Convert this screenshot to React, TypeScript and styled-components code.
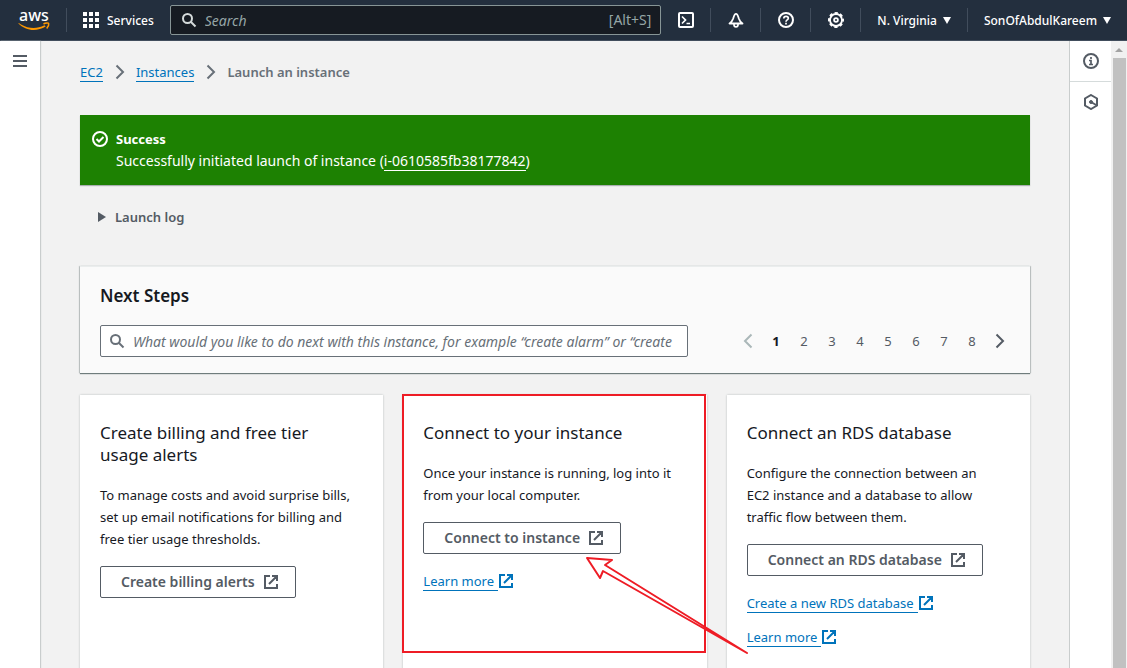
import React from "react";
import styled, { createGlobalStyle } from "styled-components";

const font = `"Noto Sans", "Open Sans", sans-serif`;

const GlobalStyle = createGlobalStyle`
  *, *::before, *::after { box-sizing: border-box; }
  body { margin: 0; font: 13px/22px ${font}; color: #16191f; background: #f2f2f2; }
  button, input { font-family: inherit; }
  h1, h2, p, ol, ul { margin: 0; padding: 0; font-weight: 400; }
  ol, ul { list-style: none; }
  svg { display: block; flex: none; }
`;

const Shell = styled.div`
  height: 100vh;
  display: flex;
  flex-direction: column;
`;

/* ---------- Top navigation ---------- */

const TopBar = styled.header`
  flex: none;
  height: 41px;
  display: flex;
  align-items: center;
  background: #232f3e;
  border-bottom: 1px solid #414d5c;
`;

const LogoLink = styled.a`
  width: 66px;
  padding-left: 17px;
`;

const Divider = styled.span`
  width: 1px;
  height: 24px;
  background: #414d5c;
`;

const ServicesButton = styled.button`
  display: flex;
  align-items: center;
  gap: 8px;
  padding: 0 16px;
  border: 0;
  background: none;
  color: #fff;
  font-size: 12px;
  font-weight: 500;
`;

const GlobalSearch = styled.label`
  flex: 1;
  min-width: 0;
  height: 30px;
  display: flex;
  align-items: center;
  gap: 8px;
  padding: 0 9px 0 10px;
  background: #161b22;
  border: 1px solid #879596;
  border-radius: 2px;
  color: #95a5a6;
  font-size: 14px;
  svg { color: #d5dbdb; }
`;

const GlobalInput = styled.input`
  flex: 1;
  min-width: 0;
  padding: 0;
  border: 0;
  outline: 0;
  background: none;
  color: #fff;
  font-size: 14px;
  &::placeholder { color: #95a5a6; font-style: italic; opacity: 1; }
`;

const IconButton = styled.button`
  width: 49px;
  height: 40px;
  display: flex;
  align-items: center;
  justify-content: center;
  padding: 0;
  border: 0;
  background: none;
  color: #fff;
`;

const MenuButton = styled.button`
  display: flex;
  align-items: center;
  gap: 6px;
  padding: 0 16px;
  border: 0;
  background: none;
  color: #fff;
  font-size: 12px;
  font-weight: 500;
  white-space: nowrap;
`;

/* ---------- Page frame ---------- */

const Body = styled.div`
  flex: 1;
  min-height: 0;
  display: flex;
`;

const LeftRail = styled.nav`
  flex: none;
  width: 40px;
  background: #fff;
  box-shadow: 1px 0 1px #c9cdcd;
`;

const RailButton = styled.button`
  width: 100%;
  height: 40px;
  display: flex;
  align-items: center;
  justify-content: center;
  padding: 0;
  border: 0;
  background: none;
  color: #545b64;
`;

const RightRail = styled.aside`
  flex: none;
  width: 42px;
  background: #fff;
  border-left: 1px solid #c9cdcd;
  ${RailButton}:first-child {
    height: 41px;
    border-bottom: 1px solid #d5dbdb;
  }
`;

const ScrollTrack = styled.div`
  flex: none;
  width: 16px;
  display: flex;
  flex-direction: column;
  align-items: center;
  background: #f1f1f1;
  color: #a3a3a3;
`;

const ScrollArrow = styled.div`
  height: 17px;
  display: flex;
  align-items: center;
`;

const ScrollThumb = styled.div`
  flex: 1;
  width: 13px;
  background: #c1c1c1;
`;

const Main = styled.main`
  flex: 1;
  min-width: 0;
  overflow-y: auto;
  scrollbar-width: none;
  padding: 20px 39px 0 40px;
`;

const Crumbs = styled.ol`
  display: flex;
  align-items: center;
  gap: 8px;
  height: 22px;
  color: #687078;
  font-weight: 600;
`;

const Crumb = styled.li`
  display: flex;
  align-items: center;
  gap: 9px;
`;

const TextLink = styled.a<{ $light?: boolean }>`
  color: ${(p) => (p.$light ? "#fff" : "#0073bb")};
  font-weight: 400;
  line-height: 18px;
  text-decoration: none;
  border-bottom: 1px solid currentColor;
`;

const Flash = styled.section`
  display: flex;
  gap: 8px;
  margin-top: 32px;
  padding: 13px 12px;
  background: #1d8102;
  color: #fff;
  box-shadow: 0 1px 1px #a9b0b0;
  font-size: 14px;
  svg { margin-top: 3px; }
`;

const FlashTitle = styled.h1`
  font-size: 13px;
  font-weight: 700;
`;

const LaunchLog = styled.button`
  display: flex;
  align-items: center;
  gap: 9px;
  height: 22px;
  margin: 21px 0 38px 18px;
  padding: 0;
  border: 0;
  background: none;
  color: #545b64;
  font-size: 13px;
  font-weight: 600;
`;

const Panel = styled.section`
  padding: 18px 20px 16px;
  background: #fafafa;
  border-top: 1px solid #eaeded;
  box-shadow: 0 1px 1px #6f7c7c, 1px 0 1px #c9cdcd, -1px 0 1px #c9cdcd;
`;

const PanelTitle = styled.h2`
  font-size: 17px;
  font-weight: 600;
`;

const PanelRow = styled.div`
  display: flex;
  align-items: center;
  justify-content: space-between;
  gap: 32px;
  margin-top: 18px;
`;

const Filter = styled.label`
  flex: 0 1 588px;
  min-width: 0;
  height: 32px;
  display: flex;
  align-items: center;
  gap: 8px;
  padding: 0 8px;
  background: #fff;
  border: 1px solid #687078;
  border-radius: 2px;
  color: #687078;
`;

const FilterInput = styled.input`
  flex: 1;
  min-width: 0;
  padding: 0;
  border: 0;
  outline: 0;
  background: none;
  font-size: 14px;
  &::placeholder { color: #687078; font-style: italic; opacity: 1; }
`;

const Pages = styled.ul`
  display: flex;
  margin-right: -4px;
`;

const PageButton = styled.button<{ $tone?: "current" | "disabled" }>`
  width: 28px;
  height: 28px;
  display: flex;
  align-items: center;
  justify-content: center;
  padding: 0;
  border: 0;
  background: none;
  font-size: 13px;
  font-weight: ${(p) => (p.$tone === "current" ? 700 : 400)};
  color: ${(p) =>
    p.$tone === "current" ? "#16191f" : p.$tone === "disabled" ? "#aab7b8" : "#545b64"};
`;

/* ---------- Cards ---------- */

const Cards = styled.div`
  display: grid;
  grid-template-columns: repeat(3, 1fr);
  gap: 20px;
  margin-top: 22px;
  padding-bottom: 40px;
`;

const Card = styled.article`
  position: relative;
  display: flex;
  flex-direction: column;
  align-items: flex-start;
  gap: 12px;
  min-height: 300px;
  padding: 27px 20px 20px;
  background: #fff;
  box-shadow: 0 0 2px #b4baba;
`;

const CardTitle = styled.h2`
  margin-bottom: 6px;
  font-size: 17px;
`;

const OutlineButton = styled.button`
  display: flex;
  align-items: center;
  gap: 8px;
  height: 32px;
  margin: 4px 0;
  padding: 0 16px 0 20px;
  background: #fff;
  border: 1px solid #545b64;
  border-radius: 2px;
  color: #545b64;
  font-size: 14px;
  line-height: 20px;
  font-weight: 600;
  white-space: nowrap;
`;

const ExternalLink = styled.a`
  display: flex;
  align-items: center;
  height: 22px;
  color: #0073bb;
  text-decoration: none;
  span {
    padding-right: 4px;
    line-height: 18px;
    border-bottom: 1px solid currentColor;
  }
`;

const Highlight = styled.div`
  position: absolute;
  z-index: 1;
  inset: -1px 1px auto -1px;
  height: 259px;
  border: 2px solid #ee1c25;
  pointer-events: none;
`;

const Arrow = styled.svg`
  position: absolute;
  z-index: 1;
  top: 160px;
  left: 180px;
  pointer-events: none;
`;

/* ---------- Icons ---------- */

const Icon = ({ children }: { children: React.ReactNode }) => (
  <svg
    width="16"
    height="16"
    viewBox="0 0 16 16"
    fill="none"
    stroke="currentColor"
    strokeWidth="2"
    aria-hidden="true"
  >
    {children}
  </svg>
);

const SearchIcon = () => (
  <Icon>
    <circle cx="6.5" cy="6.5" r="4.5" />
    <path d="M9.500 9.500l5 5" />
  </Icon>
);

const ExternalIcon = () => (
  <Icon>
    <path d="M7 2H2v12h12V10M9 2h5v5M6 10l8-8" />
  </Icon>
);

const Chevron = ({ left }: { left?: boolean }) => (
  <Icon>
    <path d={left ? "M11.500 1.500L5 8l6.500 6.500" : "M4.500 1.500L11 8l-6.500 6.500"} />
  </Icon>
);

const Caret = () => (
  <svg width="8" height="7" viewBox="0 0 8 7" fill="currentColor" aria-hidden="true">
    <path d="M0 0h8L4 7z" />
  </svg>
);

const AwsLogo = () => (
  <svg width="34" height="34" viewBox="0 0 34 34" role="img" aria-label="AWS">
    <text x="2" y="18" fill="#fff" fontFamily="Noto Sans, sans-serif" fontSize="16" fontWeight="500">
      aws
    </text>
    <path
      d="M1 20c1.500 0 2 1 3 1.500C12 26 20 26 27.500 22.300l1.200 1.200C20 28.800 9 28.500 1 20z"
      fill="#f90"
    />
    <path d="M26.500 21c2-1.200 5-1.200 5.200-.4s-.7 3.400-2 4.900" fill="none" stroke="#f90" strokeWidth="1.500" />
  </svg>
);

const GridIcon = () => (
  <Icon>
    <path d="M0 2h4M6 2h4M12 2h4M0 8h4M6 8h4M12 8h4M0 14h4M6 14h4M12 14h4" strokeWidth="4" />
  </Icon>
);

const LinkOut = ({ children }: { children: React.ReactNode }) => (
  <ExternalLink href="#">
    <span>{children}</span>
    <ExternalIcon />
  </ExternalLink>
);

export default function App() {
  return (
    <Shell>
      <GlobalStyle />
      <TopBar>
        <LogoLink href="#">
          <AwsLogo />
        </LogoLink>
        <Divider />
        <ServicesButton>
          <GridIcon />
          Services
        </ServicesButton>
        <GlobalSearch>
          <SearchIcon />
          <GlobalInput type="text" placeholder="Search" aria-label="Search" />
          <span>[Alt+S]</span>
        </GlobalSearch>
        <IconButton aria-label="CloudShell">
          <Icon>
            <rect x="1" y="1" width="14" height="14" rx="1" />
            <path d="M4 4.500L7.500 8 4 11.500M8.500 11.500H12" strokeWidth="1.700" />
          </Icon>
        </IconButton>
        <Divider />
        <IconButton aria-label="Notifications">
          <Icon>
            <path
              d="M1.500 11.500h13c-2-1.300-3-2.800-3.700-5C10 3.500 9.200 1.800 8 1.800S6 3.500 5.200 6.500c-.7 2.200-1.700 3.700-3.700 5z"
              strokeWidth="1.800"
              strokeLinejoin="round"
            />
            <path d="M6 11.500v1.300c0 2.700 4 2.700 4 0v-1.300" strokeWidth="1.700" />
          </Icon>
        </IconButton>
        <Divider />
        <IconButton aria-label="Help">
          <Icon>
            <circle cx="8" cy="8" r="7" />
            <path
              d="M5.800 6.500c0-3 4.500-2.800 4.500-.2C10.300 8 8 7.800 8 9.700M8 10.800v1.700"
              strokeWidth="1.700"
            />
          </Icon>
        </IconButton>
        <Divider />
        <IconButton aria-label="Settings">
          <Icon>
            <circle cx="8" cy="8" r="6" strokeWidth="1.800" />
            <circle
              cx="8"
              cy="8"
              r="7"
              strokeDasharray="3.200 2.298"
              strokeDashoffset="1.600"
            />
            <circle cx="8" cy="8" r="1.900" strokeWidth="1.800" />
          </Icon>
        </IconButton>
        <Divider />
        <MenuButton>
          N. Virginia <Caret />
        </MenuButton>
        <Divider />
        <MenuButton>
          SonOfAbdulKareem <Caret />
        </MenuButton>
      </TopBar>

      <Body>
        <LeftRail>
          <RailButton aria-label="Open navigation">
            <Icon>
              <path d="M1 3h14M1 8h14M1 13h14" />
            </Icon>
          </RailButton>
        </LeftRail>

        <Main>
          <Crumbs>
            <Crumb>
              <TextLink href="#">EC2</TextLink>
              <Chevron />
            </Crumb>
            <Crumb>
              <TextLink href="#">Instances</TextLink>
              <Chevron />
            </Crumb>
            <Crumb>Launch an instance</Crumb>
          </Crumbs>

          <Flash>
            <Icon>
              <circle cx="8" cy="8" r="7" />
              <path d="M4.500 8L7 10.500 11.500 6" />
            </Icon>
            <div>
              <FlashTitle>Success</FlashTitle>
              <p>
                Successfully initiated launch of instance (
                <TextLink $light href="#">i-0610585fb38177842</TextLink>)
              </p>
            </div>
          </Flash>

          <LaunchLog>
            <svg width="8" height="10" viewBox="0 0 8 10" fill="currentColor" aria-hidden="true">
              <path d="M0 0l8 5-8 5z" />
            </svg>
            Launch log
          </LaunchLog>

          <Panel>
            <PanelTitle>Next Steps</PanelTitle>
            <PanelRow>
              <Filter>
                <SearchIcon />
                <FilterInput
                  type="text"
                  aria-label="Find next steps"
                  placeholder="What would you like to do next with this instance, for example “create alarm” or “create"
                />
              </Filter>
              <Pages>
                <li>
                  <PageButton $tone="disabled" disabled aria-label="Previous page">
                    <Chevron left />
                  </PageButton>
                </li>
                {[1, 2, 3, 4, 5, 6, 7, 8].map((n) => (
                  <li key={n}>
                    <PageButton $tone={n === 1 ? "current" : undefined}>{n}</PageButton>
                  </li>
                ))}
                <li>
                  <PageButton aria-label="Next page">
                    <Chevron />
                  </PageButton>
                </li>
              </Pages>
            </PanelRow>
          </Panel>

          <Cards>
            <Card>
              <CardTitle>
                Create billing and free tier
                <br />
                usage alerts
              </CardTitle>
              <p>
                To manage costs and avoid surprise bills, set up email notifications for billing and
                free tier usage thresholds.
              </p>
              <OutlineButton>
                Create billing alerts <ExternalIcon />
              </OutlineButton>
            </Card>
            <Card>
              <CardTitle>Connect to your instance</CardTitle>
              <p>Once your instance is running, log into it from your local computer.</p>
              <OutlineButton>
                Connect to instance <ExternalIcon />
              </OutlineButton>
              <LinkOut>Learn more</LinkOut>
              <Highlight />
              <Arrow
                width="170"
                height="105"
                viewBox="0 0 170 105"
                fill="none"
                stroke="#ee1c25"
                strokeWidth="2"
                strokeLinejoin="round"
              >
                <path d="M4 3l25 2-7 5 142 88L20 16l-3 7z" />
              </Arrow>
            </Card>
            <Card>
              <CardTitle>Connect an RDS database</CardTitle>
              <p>
                Configure the connection between an
                <br />
                EC2 instance and a database to allow
                <br />
                traffic flow between them.
              </p>
              <OutlineButton>
                Connect an RDS database <ExternalIcon />
              </OutlineButton>
              <LinkOut>Create a new RDS database</LinkOut>
              <LinkOut>Learn more</LinkOut>
            </Card>
          </Cards>
        </Main>

        <RightRail>
          <RailButton aria-label="Info">
            <Icon>
              <circle cx="8" cy="8" r="7" />
              <path d="M8 4v2M6 7.500h2v4M6 11.500h4" strokeWidth="1.700" />
            </Icon>
          </RailButton>
          <RailButton aria-label="Tutorials">
            <Icon>
              <path d="M8 1l6 3.500v7L8 15l-6-3.500v-7z" />
              <circle cx="8" cy="8" r="1.500" fill="currentColor" strokeWidth="1" />
              <path d="M8 8l6 3.500" />
            </Icon>
          </RailButton>
        </RightRail>
        <ScrollTrack aria-hidden="true">
          <ScrollArrow>
            <svg width="8" height="4" viewBox="0 0 8 4" fill="currentColor">
              <path d="M0 4l4-4 4 4z" />
            </svg>
          </ScrollArrow>
          <ScrollThumb />
        </ScrollTrack>
      </Body>
    </Shell>
  );
}
